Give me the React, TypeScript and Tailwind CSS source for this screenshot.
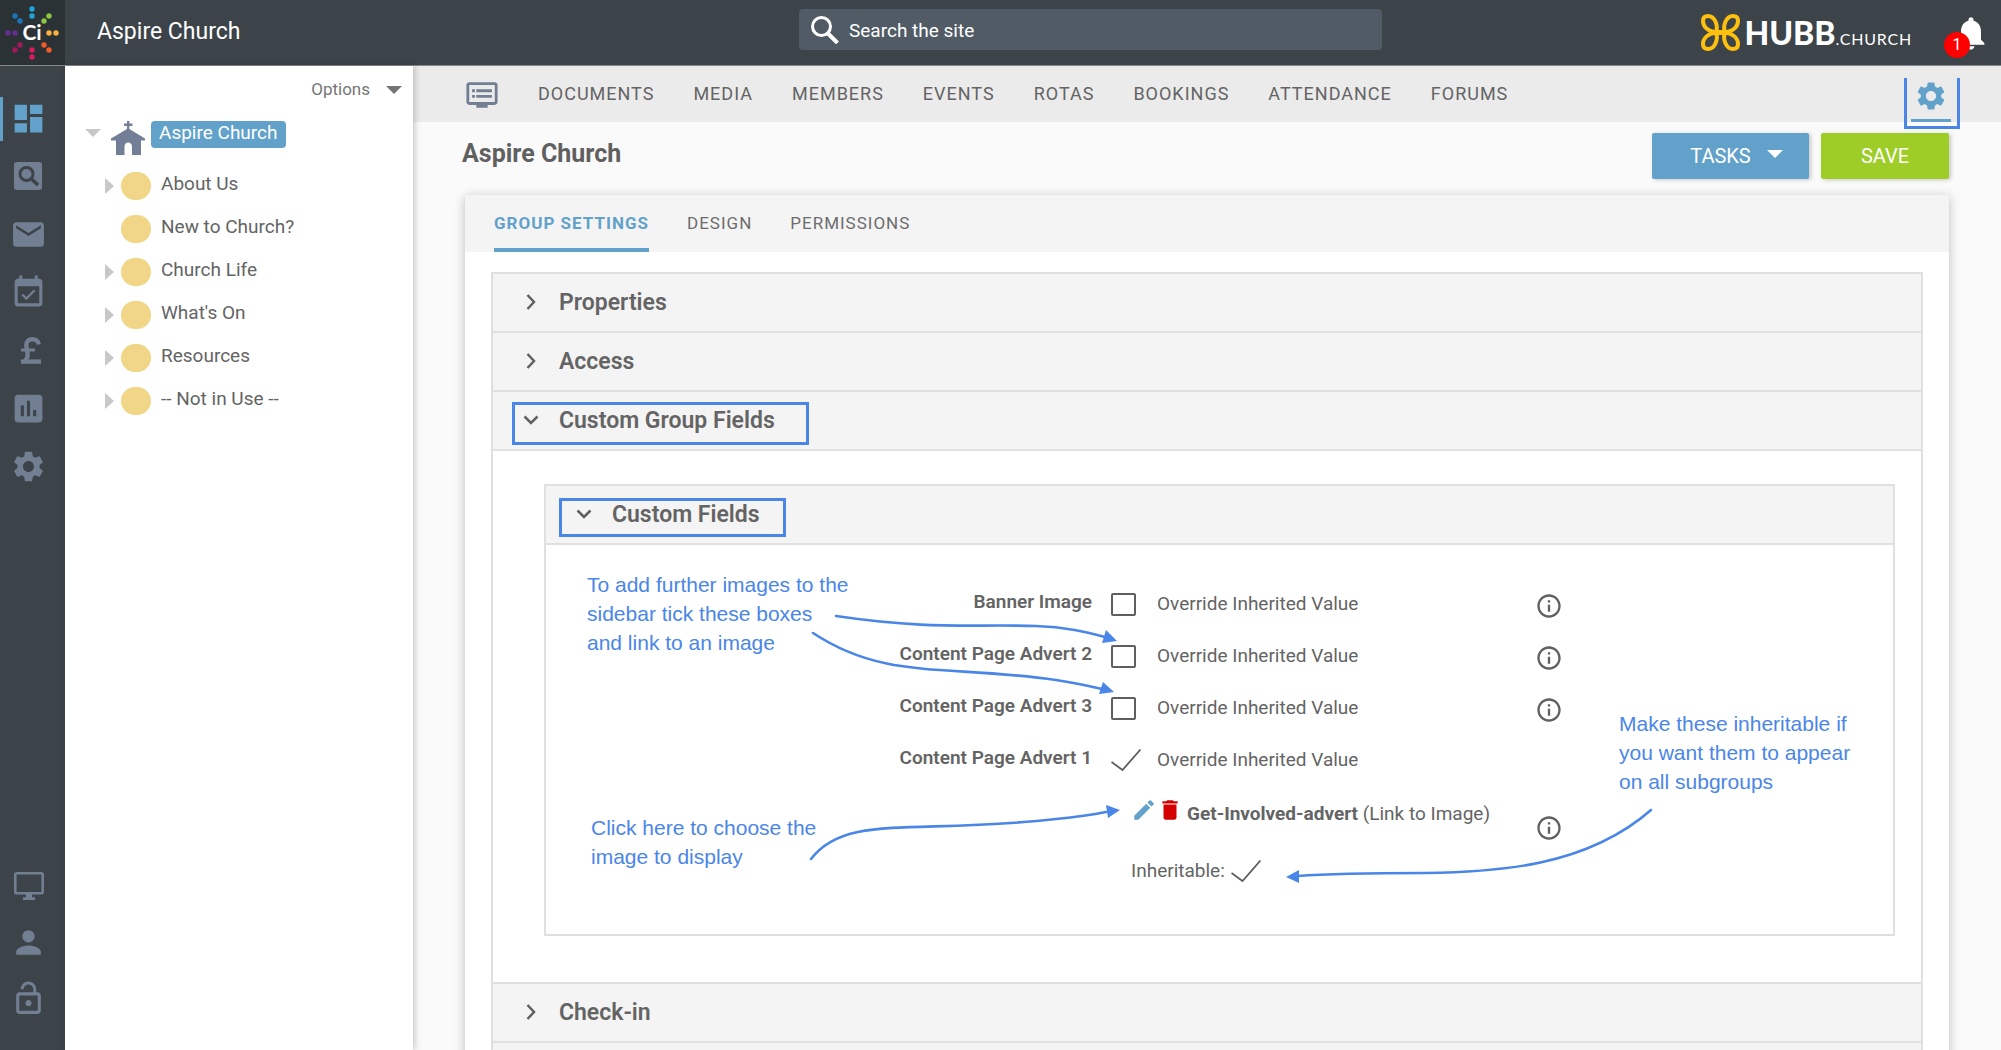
import React, { useState } from "react";
import {
  MdDashboard,
  MdDelete,
  MdDvr,
  MdEdit,
  MdEmail,
  MdEventAvailable,
  MdInfoOutline,
  MdInsertChart,
  MdLockOpen,
  MdNotifications,
  MdPerson,
  MdSettings,
} from "react-icons/md";

interface TreeItem {
  name: string;
  expandable: boolean;
}

interface OverrideField {
  id: string;
  label: string;
  checked: boolean;
  info: boolean;
}

const treeItems: TreeItem[] = [
  { name: "About Us", expandable: true },
  { name: "New to Church?", expandable: false },
  { name: "Church Life", expandable: true },
  { name: "What's On", expandable: true },
  { name: "Resources", expandable: true },
  { name: "-- Not in Use --", expandable: true },
];

const navItems = ["DOCUMENTS", "MEDIA", "MEMBERS", "EVENTS", "ROTAS", "BOOKINGS", "ATTENDANCE", "FORUMS"];

const tabs = ["GROUP SETTINGS", "DESIGN", "PERMISSIONS"];

const overrideFields: OverrideField[] = [
  { id: "banner-image", label: "Banner Image", checked: false, info: true },
  { id: "advert-2", label: "Content Page Advert 2", checked: false, info: true },
  { id: "advert-3", label: "Content Page Advert 3", checked: false, info: true },
  { id: "advert-1", label: "Content Page Advert 1", checked: true, info: false },
];

const logoDots: [number, number, string][] = [
  [32, 9, "#1ea5d9"],
  [32, 16, "#1ea5d9"],
  [49, 16, "#8dc63f"],
  [44, 21, "#8dc63f"],
  [49, 33, "#fbb040"],
  [56, 33, "#fbb040"],
  [44, 45, "#f15a29"],
  [49, 50, "#f15a29"],
  [32, 50, "#da1c5c"],
  [32, 57, "#da1c5c"],
  [20, 45, "#a3195b"],
  [15, 50, "#a3195b"],
  [8, 33, "#662d91"],
  [15, 33, "#662d91"],
  [15, 16, "#1c75bc"],
  [20, 21, "#1c75bc"],
];

const CiLogo = () => (
  <svg viewBox="0 0 65 65" className="h-[65px] w-[65px] bg-[#2b3235]">
    {logoDots.map(([x, y, fill]) => (
      <circle key={`${x}-${y}`} cx={x} cy={y} r="2.7" fill={fill} />
    ))}
    <text x="32" y="40" textAnchor="middle" fill="#fff" fontSize="21" fontWeight="700" fontFamily="Lato, sans-serif">
      Ci
    </text>
  </svg>
);

const HubbMark = () => {
  const petal = "M15 18.500C17.500 12 14 2 7 2C3.500 2 2 3.500 2 7C2 12 6 17 15 18.500";
  return (
    <svg viewBox="0 0 39 37" className="h-[37px] w-[39px]" fill="none" stroke="#fdc00f" strokeWidth="4">
      <path d={petal} />
      <path d={petal} transform="matrix(-1 0 0 1 39 0)" />
      <path d={petal} transform="matrix(1 0 0 -1 0 37)" />
      <path d={petal} transform="matrix(-1 0 0 -1 39 37)" />
      <path d="M12 18.500H27" strokeWidth="5" />
    </svg>
  );
};

const SearchIcon = () => (
  <svg viewBox="0 0 28 28" className="h-7 w-7" fill="none" stroke="#fff">
    <circle cx="10.500" cy="10.500" r="9" strokeWidth="3" />
    <path d="M17 17.500L26.500 27" strokeWidth="4" />
  </svg>
);

const SearchBoxIcon = () => (
  <svg viewBox="0 0 28 28" className="h-7 w-7">
    <rect width="28" height="28" rx="3" fill="#727f92" />
    <circle cx="12.500" cy="12" r="6.500" fill="none" stroke="#3c4349" strokeWidth="3" />
    <path d="M17 16.500L24 23" stroke="#3c4349" strokeWidth="3.600" />
  </svg>
);

const PoundIcon = () => (
  <svg viewBox="0 0 20 27" className="ml-1.5 h-[27px] w-5" fill="none" stroke="#727f92">
    <path d="M17.800 7.500C17.500 4.200 15 2.200 11.500 2.200C7.500 2.200 5.300 4.500 5.300 8C5.300 11 6.600 14 6.600 18C6.600 20.500 5.800 22.500 4 24" strokeWidth="4.400" />
    <path d="M0 13H14" strokeWidth="3" />
    <path d="M0 24.600H20" strokeWidth="4.400" />
  </svg>
);

const MonitorIcon = () => (
  <svg viewBox="0 0 30 28" className="ml-0.5 h-7 w-[30px]" fill="#727f92">
    <rect x="1.300" y="1.300" width="27.400" height="20" rx="1.500" fill="none" stroke="#727f92" strokeWidth="2.600" />
    <path d="M12 22h6v3.200h3V28H9v-2.800h3z" />
  </svg>
);

const ChurchIcon = () => (
  <svg viewBox="0 0 34 34" className="h-[34px] w-[34px]" fill="#727f96">
    <path d="M16 0h2.400v2.500h3v2.400h-3v3L34 17.500v2H30V34H21V26c0-3-1.500-4.500-3.800-4.500S13.500 23 13.500 26v8H5V19.500H0v-2L16 8V4.900h-3V2.500h3z" />
  </svg>
);

const Chevron = ({ open }: { open: boolean }) => (
  <svg viewBox="0 0 16 16" className="mb-1 h-4 w-4" fill="none" stroke="#606060" strokeWidth="2.500">
    <path d={open ? "M1.500 4.500L8 11L14.500 4.500" : "M4.500 1L11 8L4.500 15"} />
  </svg>
);

interface TickBoxProps {
  id: string;
  checked: boolean;
  onChange: () => void;
}

// Empty box when off, a bare tick without the box when on
const TickBox = ({ id, checked, onChange }: TickBoxProps) => (
  <span className="grid h-6 w-8 items-center">
    <input
      id={id}
      type="checkbox"
      checked={checked}
      onChange={onChange}
      className="col-start-1 row-start-1 h-[23px] w-[25px] appearance-none rounded-xs border-2 border-[#5f5f5f] checked:border-transparent"
    />
    {checked && (
      <svg viewBox="0 0 30 22" className="pointer-events-none col-start-1 row-start-1 h-[22px] w-[30px]" fill="none" stroke="#5f5f5f" strokeWidth="1.800">
        <path d="M0.500 13L11.500 21L29.500 0.500" />
      </svg>
    )}
  </span>
);

const InfoButton = () => (
  <button type="button" aria-label="Info" className="text-[#606060]">
    <MdInfoOutline className="h-7 w-7" />
  </button>
);

interface AccordionHeaderProps {
  title: string;
  open?: boolean;
  children?: React.ReactNode;
}

const AccordionHeader = ({ title, open = false, children }: AccordionHeaderProps) => (
  <h2 className="relative border-b-2 border-[#e0e0e0] bg-[#f4f4f4]">
    <button type="button" aria-expanded={open} className="flex h-[57px] w-full items-center gap-5 pt-0.5 pl-[30px] text-left text-[23px] font-semibold text-[#646464]">
      <Chevron open={open} />
      {title}
    </button>
    {children}
  </h2>
);

const Arrows = () => (
  <svg viewBox="0 0 1348 389" className="pointer-events-none absolute top-0 left-0 h-[389px] w-[1348px]" fill="none" stroke="#4a86e8" strokeWidth="2.600" strokeLinecap="round">
    <path d="M290 71C385 85 425 79 490 81C520 82 540 87 559 92" />
    <path d="M571 96L556 98L560 85Z" fill="#4a86e8" stroke="none" />
    <path d="M267 88C340 136 400 119 510 135C530 138 543 141 556 144" />
    <path d="M568 147L553 149L557 137Z" fill="#4a86e8" stroke="none" />
    <path d="M265 314C300 268 370 290 510 274C530 272 545 270 560 267" />
    <path d="M574 265L560 260L562 273Z" fill="#4a86e8" stroke="none" />
    <path d="M1105 265C1040 322 950 327 880 328C830 328 790 328 752 331" />
    <path d="M740 332L753 325V338Z" fill="#4a86e8" stroke="none" />
  </svg>
);

const CustomFieldsForm = () => {
  const [checked, setChecked] = useState<Record<string, boolean>>({
    "banner-image": false,
    "advert-2": false,
    "advert-3": false,
    "advert-1": true,
  });
  const [inheritable, setInheritable] = useState(true);

  const toggle = (id: string) => setChecked((prev) => ({ ...prev, [id]: !prev[id] }));

  return (
    <form className="relative pt-[33px] pb-[34px] text-[19px] text-[#646464]">
      {overrideFields.map((field) => (
        <div key={field.id} className="grid h-[52px] grid-cols-[565px_46px_378px_28px] items-center">
          <span className="pr-[19px] pb-1 text-right font-semibold">{field.label}</span>
          <TickBox id={field.id} checked={checked[field.id]} onChange={() => toggle(field.id)} />
          <label htmlFor={field.id}>Override Inherited Value</label>
          {field.info && (
            <span className="flex pt-1">
              <InfoButton />
            </span>
          )}
        </div>
      ))}

      <div className="grid grid-cols-[989px_28px]">
        <div className="pl-[585px]">
          <div className="flex h-14 items-center">
            <button type="button" aria-label="Edit" className="mb-2 text-[#62a1c9]">
              <MdEdit className="h-[26px] w-[26px]" />
            </button>
            <button type="button" aria-label="Delete" className="mb-2 text-[#d40000]">
              <MdDelete className="h-[26px] w-[26px]" />
            </button>
            <p className="pl-1">
              <a href="#" className="font-bold">Get-Involved-advert</a> (Link to Image)
            </p>
          </div>
          <div className="flex h-[58px] items-center gap-1.5">
            <label htmlFor="inheritable">Inheritable:</label>
            <TickBox id="inheritable" checked={inheritable} onChange={() => setInheritable(!inheritable)} />
          </div>
        </div>
        <span className="flex items-start pt-7">
          <InfoButton />
        </span>
      </div>

      {/* Help notes laid over the form */}
      <div className="pointer-events-none absolute inset-0 font-['Liberation_Sans',Arial,sans-serif] text-[21px] leading-[29px] text-[#4a86e8]">
        <p className="absolute top-[25px] left-[41px]">
          To add further images to the<br />sidebar tick these boxes<br />and link to an image
        </p>
        <p className="absolute top-[268px] left-[45px]">
          Click here to choose the<br />image to display
        </p>
        <p className="absolute top-[164px] left-[1073px]">
          Make these inheritable if<br />you want them to appear<br />on all subgroups
        </p>
        <Arrows />
      </div>
    </form>
  );
};

const IconRail = () => (
  <aside className="flex w-[65px] shrink-0 flex-col justify-between bg-[#3c4349] pt-[23px] pb-6 text-[#727f92]">
    <nav className="flex flex-col *:flex *:h-[58px] *:w-14 *:items-center *:justify-center">
      <a href="#" aria-label="Dashboard" className="relative text-[#62a1c9]">
        <span className="absolute top-2 left-0 h-11 w-[3px] bg-[#62a1c9]" />
        <MdDashboard className="h-[37px] w-[37px]" />
      </a>
      <a href="#" aria-label="Search"><SearchBoxIcon /></a>
      <a href="#" aria-label="Mail"><MdEmail className="h-[37px] w-[37px]" /></a>
      <a href="#" aria-label="Calendar"><MdEventAvailable className="h-[37px] w-[37px]" /></a>
      <a href="#" aria-label="Giving"><PoundIcon /></a>
      <a href="#" aria-label="Reports"><MdInsertChart className="h-[37px] w-[37px]" /></a>
      <a href="#" aria-label="Settings"><MdSettings className="h-[37px] w-[37px]" /></a>
    </nav>
    <nav className="flex flex-col *:flex *:h-14 *:w-14 *:items-center *:justify-center">
      <a href="#" aria-label="Website"><MonitorIcon /></a>
      <a href="#" aria-label="Profile"><MdPerson className="h-[37px] w-[37px]" /></a>
      <a href="#" aria-label="Log out"><MdLockOpen className="h-[37px] w-[37px]" /></a>
    </nav>
  </aside>
);

const GroupTree = () => (
  <aside className="z-10 w-[348px] shrink-0 bg-white text-[19px] text-[#646464] shadow-[2px_0_6px_rgba(0,0,0,0.2)]">
    <div className="flex h-[47px] justify-end pr-[11px]">
      <button type="button" className="flex items-center gap-4 text-[17px] text-[#757575]">
        Options
        <svg viewBox="0 0 16 8" className="h-2 w-4" fill="#757575">
          <path d="M0 0H16L8 8Z" />
        </svg>
      </button>
    </div>
    <div className="flex h-[50px] items-start pt-2 pl-5">
      <svg viewBox="0 0 16 8" className="mt-2 h-2 w-4" fill="#c8c8c8">
        <path d="M0 0H16L8 8Z" />
      </svg>
      <span className="ml-2.5"><ChurchIcon /></span>
      <a href="#" className="ml-1.5 h-[27px] rounded-sm bg-[#62a1c9] px-2 leading-6 text-white">Aspire Church</a>
    </div>
    <ul className="pt-px">
      {treeItems.map((item) => (
        <li key={item.name} className="flex h-[43px] items-center pl-10">
          <svg viewBox="0 0 9 16" className="h-4 w-[9px]" fill={item.expandable ? "#c8c8c8" : "none"}>
            <path d="M0 0L9 8L0 16Z" />
          </svg>
          <span className="ml-[7px] h-7 w-[30px] rounded-full bg-[#f0d686]" />
          <a href="#" className="pb-0.5 pl-2.5">{item.name}</a>
        </li>
      ))}
    </ul>
  </aside>
);

const App = () => {
  const [search, setSearch] = useState("");
  const [activeTab, setActiveTab] = useState("GROUP SETTINGS");

  return (
    <div className="flex h-screen flex-col overflow-hidden bg-[#fafafa] font-[Roboto,sans-serif]">
      <header className="flex h-[66px] shrink-0 items-center border-b border-[#85898c] bg-[#3c4349] text-white">
        <CiLogo />
        <h1 className="w-[734px] pl-8 text-[23px]">Aspire Church</h1>
        <label className="mb-1.5 flex h-[41px] w-[583px] items-center gap-2.5 rounded-sm bg-[#515b65] pl-3">
          <SearchIcon />
          <input
            value={search}
            onChange={(e) => setSearch(e.target.value)}
            placeholder="Search the site"
            aria-label="Search the site"
            className="flex-1 bg-transparent pt-1 text-[19px] outline-none placeholder:text-white"
          />
        </label>
        <div className="ml-auto flex items-center font-[Lato,sans-serif]">
          <HubbMark />
          <p className="flex items-baseline pl-1">
            <span className="text-[32px] leading-9 font-black">HUBB</span>
            <span className="text-base tracking-wider">.CHURCH</span>
          </p>
        </div>
        <button type="button" aria-label="Notifications" className="relative mr-2.5 ml-[39px]">
          <MdNotifications className="h-10 w-10" />
          <span className="absolute bottom-[-5px] left-[-7px] flex h-[26px] w-[26px] items-center justify-center rounded-full bg-[#ff0000] text-base">1</span>
        </button>
      </header>

      <div className="flex min-h-0 flex-1">
        <IconRail />
        <GroupTree />

        <main className="min-w-0 flex-1">
          <nav className="flex h-14 items-center gap-[39px] bg-[#ebebeb] pl-[52px] text-lg tracking-[1px] text-[#646464]">
            <a href="#" aria-label="Pages" className="pt-0.5 text-[#727f92]">
              <MdDvr className="h-[34px] w-[34px]" />
            </a>
            {navItems.map((item) => (
              <a key={item} href="#">{item}</a>
            ))}
            <a href="#" aria-label="Group settings" className="relative mr-[50px] ml-auto flex h-14 w-10 justify-center border-b-[3px] border-[#62a1c9] pt-[13px] text-[#62a1c9]">
              <MdSettings className="h-[34px] w-[34px]" />
              <span className="absolute top-3 left-[-7px] h-[51px] w-14 border-3 border-t-0 border-[#4a86e8]" />
            </a>
          </nav>

          <div className="flex h-[73px] items-start justify-between pt-[11px] pr-[52px] pl-[49px]">
            <h1 className="pt-0.5 text-[25px] font-bold text-[#606060]">Aspire Church</h1>
            <div className="flex gap-3 text-xl text-white">
              <button type="button" className="flex h-[46px] w-[157px] items-center justify-center gap-4 rounded-xs bg-[#62a1c9] pl-3 shadow-[2px_1px_4px_rgba(0,0,0,0.2)]">
                TASKS
                <svg viewBox="0 0 16 8" className="mb-1 h-2 w-4" fill="#fff">
                  <path d="M0 0H16L8 8Z" />
                </svg>
              </button>
              <button type="button" className="h-[46px] w-32 rounded-xs bg-[#9ecd27] shadow-[2px_1px_4px_rgba(0,0,0,0.2)]">SAVE</button>
            </div>
          </div>

          <section className="mx-[52px] bg-white pb-6 shadow-[0_2px_10px_rgba(0,0,0,0.25)]">
            <div role="tablist" className="flex h-[57px] gap-[38px] bg-[#f4f4f4] pl-[29px] text-[17px] tracking-[1px] text-[#6c6c6c]">
              {tabs.map((tab) => (
                <button
                  key={tab}
                  type="button"
                  role="tab"
                  aria-selected={tab === activeTab}
                  onClick={() => setActiveTab(tab)}
                  className={
                    tab === activeTab
                      ? "border-b-4 border-[#62a1c9] pt-1 font-bold text-[#62a1c9]"
                      : "border-b-4 border-transparent pt-1"
                  }
                >
                  {tab}
                </button>
              ))}
            </div>

            <div className="mx-[26px] mt-5 border-2 border-b-0 border-[#e0e0e0]">
              <AccordionHeader title="Properties" />
              <AccordionHeader title="Access" />
              <AccordionHeader title="Custom Group Fields" open>
                <span className="pointer-events-none absolute top-2.5 left-[19px] h-[43px] w-[297px] border-3 border-[#4a86e8]" />
              </AccordionHeader>
              <div className="border-b-2 border-[#e0e0e0] pt-[33px] pr-[26px] pb-[46px] pl-[51px]">
                <div className="border-2 border-[#e0e0e0]">
                  <AccordionHeader title="Custom Fields" open>
                    <span className="pointer-events-none absolute top-3 left-[13px] h-[39px] w-[227px] border-3 border-[#4a86e8]" />
                  </AccordionHeader>
                  <CustomFieldsForm />
                </div>
              </div>
              <AccordionHeader title="Check-in" />
              <div className="h-[57px] bg-[#f4f4f4]" />
            </div>
          </section>
        </main>
      </div>
    </div>
  );
};

export default App;
